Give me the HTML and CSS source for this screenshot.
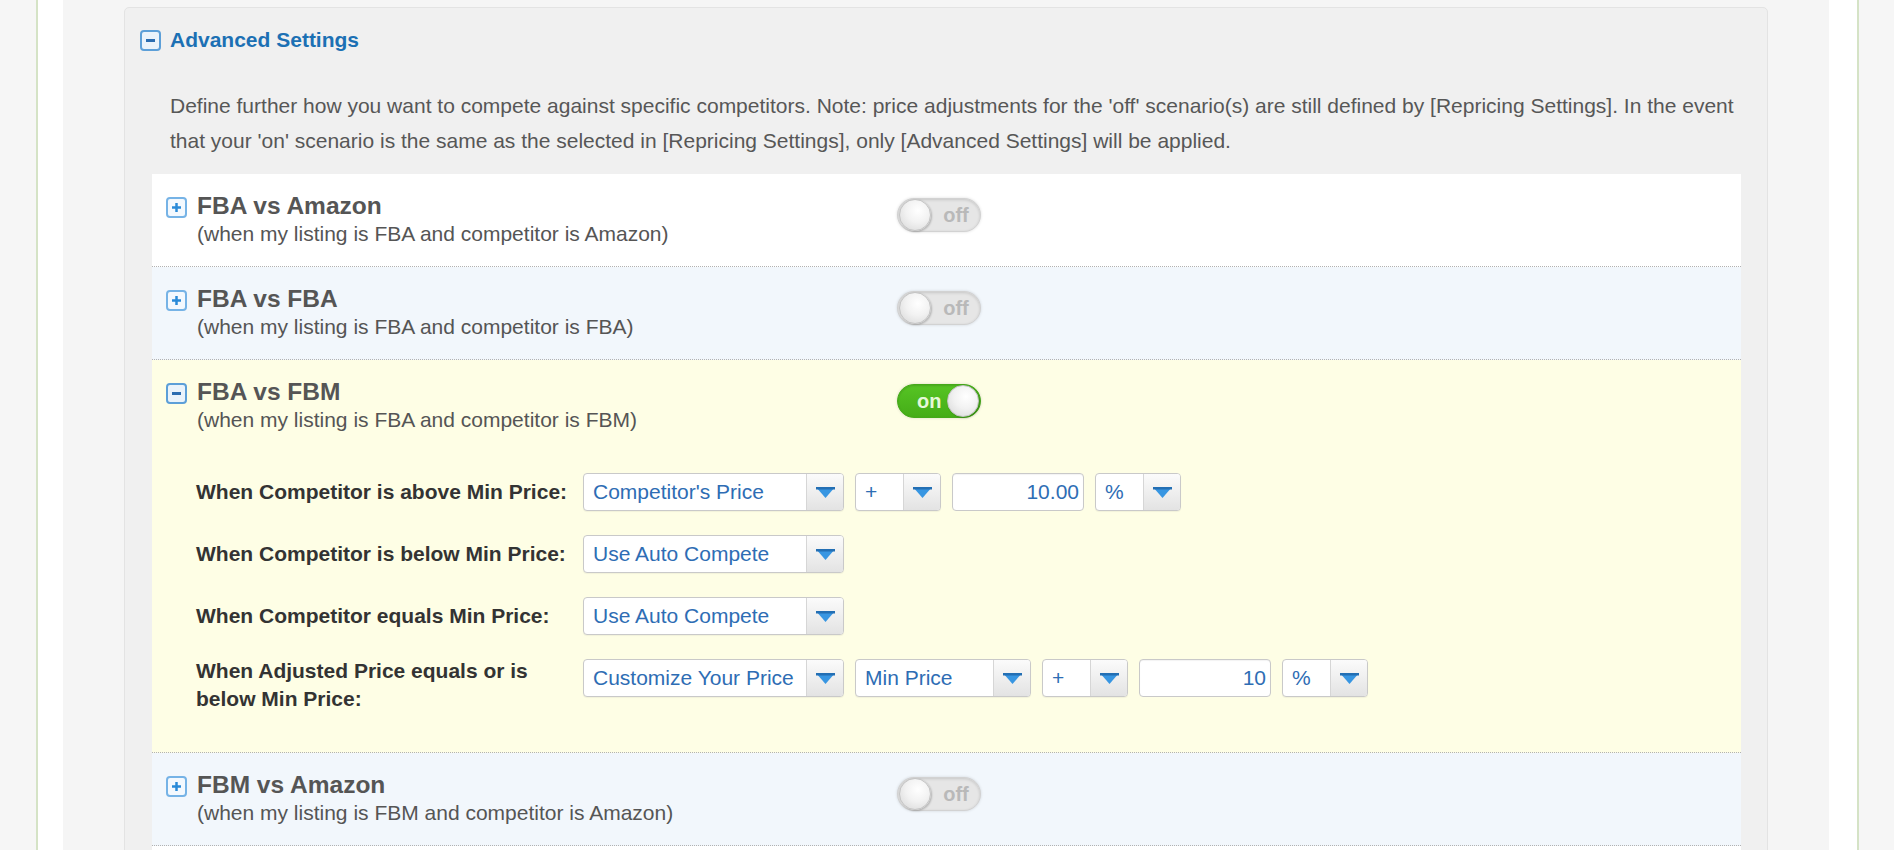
FILE: index.html
```html
<!DOCTYPE html>
<html>
<head>
<meta charset="utf-8">
<link rel="stylesheet" href="styles.css">
</head>
<body>
<div class="page">
  <div class="gutter">
    <div class="panel">
      <div class="panel-head">
        <svg class="ico" width="21" height="21" viewBox="0 0 21 21"><rect x="1" y="1" width="19" height="19" rx="3" fill="#eaf3fb" stroke="#5c9fd8" stroke-width="2"/><rect x="6" y="9" width="9" height="3" fill="#2b6db1"/></svg>
        <span class="panel-title">Advanced Settings</span>
      </div>
      <p class="desc">Define further how you want to compete against specific competitors. Note: price adjustments for the 'off' scenario(s) are still defined by [Repricing Settings]. In the event that your 'on' scenario is the same as the selected in [Repricing Settings], only [Advanced Settings] will be applied.</p>
      <div class="rows">
        <div class="row row-white">
          <div class="row-head">
            <div class="row-title">
              <svg class="ico" width="21" height="21" viewBox="0 0 21 21"><rect x="1" y="1" width="19" height="19" rx="3" fill="#f4f9fe" stroke="#76b3e6" stroke-width="2"/><rect x="6" y="9.25" width="9" height="2.5" fill="#2a8ad8"/><rect x="9.25" y="6" width="2.5" height="9" fill="#2a8ad8"/></svg>
              <div>
                <div class="title">FBA vs Amazon</div>
                <div class="sub">(when my listing is FBA and competitor is Amazon)</div>
              </div>
            </div>
            <div class="toggle off"><span class="knob"></span><span class="tlabel">off</span></div>
          </div>
        </div>
        <div class="row row-blue">
          <div class="row-head">
            <div class="row-title">
              <svg class="ico" width="21" height="21" viewBox="0 0 21 21"><rect x="1" y="1" width="19" height="19" rx="3" fill="#f4f9fe" stroke="#76b3e6" stroke-width="2"/><rect x="6" y="9.25" width="9" height="2.5" fill="#2a8ad8"/><rect x="9.25" y="6" width="2.5" height="9" fill="#2a8ad8"/></svg>
              <div>
                <div class="title">FBA vs FBA</div>
                <div class="sub">(when my listing is FBA and competitor is FBA)</div>
              </div>
            </div>
            <div class="toggle off"><span class="knob"></span><span class="tlabel">off</span></div>
          </div>
        </div>
        <div class="row row-yellow">
          <div class="row-head">
            <div class="row-title">
              <svg class="ico" width="21" height="21" viewBox="0 0 21 21"><rect x="1" y="1" width="19" height="19" rx="3" fill="#eaf3fb" stroke="#5c9fd8" stroke-width="2"/><rect x="6" y="9" width="9" height="3" fill="#2b6db1"/></svg>
              <div>
                <div class="title">FBA vs FBM</div>
                <div class="sub">(when my listing is FBA and competitor is FBM)</div>
              </div>
            </div>
            <div class="toggle on"><span class="tlabel">on</span><span class="knob"></span></div>
          </div>
          <div class="form">
            <div class="frow">
              <div class="flabel">When Competitor is above Min Price:</div>
              <div class="fields">
                <div class="sel w-wide"><span class="sel-text">Competitor's Price</span><span class="sel-btn"><svg width="19" height="11" viewBox="0 0 19 11"><polygon points="0,0 19,0 9.5,11" fill="#3896e2"/><rect x="0" y="0" width="19" height="2.5" fill="#236fb4"/></svg></span></div>
                <div class="sel w-sm"><span class="sel-text">+</span><span class="sel-btn"><svg width="19" height="11" viewBox="0 0 19 11"><polygon points="0,0 19,0 9.5,11" fill="#3896e2"/><rect x="0" y="0" width="19" height="2.5" fill="#236fb4"/></svg></span></div>
                <div class="inp">10.00</div>
                <div class="sel w-sm"><span class="sel-text">%</span><span class="sel-btn"><svg width="19" height="11" viewBox="0 0 19 11"><polygon points="0,0 19,0 9.5,11" fill="#3896e2"/><rect x="0" y="0" width="19" height="2.5" fill="#236fb4"/></svg></span></div>
              </div>
            </div>
            <div class="frow">
              <div class="flabel">When Competitor is below Min Price:</div>
              <div class="fields">
                <div class="sel w-wide"><span class="sel-text">Use Auto Compete</span><span class="sel-btn"><svg width="19" height="11" viewBox="0 0 19 11"><polygon points="0,0 19,0 9.5,11" fill="#3896e2"/><rect x="0" y="0" width="19" height="2.5" fill="#236fb4"/></svg></span></div>
              </div>
            </div>
            <div class="frow">
              <div class="flabel">When Competitor equals Min Price:</div>
              <div class="fields">
                <div class="sel w-wide"><span class="sel-text">Use Auto Compete</span><span class="sel-btn"><svg width="19" height="11" viewBox="0 0 19 11"><polygon points="0,0 19,0 9.5,11" fill="#3896e2"/><rect x="0" y="0" width="19" height="2.5" fill="#236fb4"/></svg></span></div>
              </div>
            </div>
            <div class="frow">
              <div class="flabel multi">When Adjusted Price equals or is below Min Price:</div>
              <div class="fields">
                <div class="sel w-wide"><span class="sel-text">Customize Your Price</span><span class="sel-btn"><svg width="19" height="11" viewBox="0 0 19 11"><polygon points="0,0 19,0 9.5,11" fill="#3896e2"/><rect x="0" y="0" width="19" height="2.5" fill="#236fb4"/></svg></span></div>
                <div class="sel w-mid"><span class="sel-text">Min Price</span><span class="sel-btn"><svg width="19" height="11" viewBox="0 0 19 11"><polygon points="0,0 19,0 9.5,11" fill="#3896e2"/><rect x="0" y="0" width="19" height="2.5" fill="#236fb4"/></svg></span></div>
                <div class="sel w-sm"><span class="sel-text">+</span><span class="sel-btn"><svg width="19" height="11" viewBox="0 0 19 11"><polygon points="0,0 19,0 9.5,11" fill="#3896e2"/><rect x="0" y="0" width="19" height="2.5" fill="#236fb4"/></svg></span></div>
                <div class="inp">10</div>
                <div class="sel w-sm"><span class="sel-text">%</span><span class="sel-btn"><svg width="19" height="11" viewBox="0 0 19 11"><polygon points="0,0 19,0 9.5,11" fill="#3896e2"/><rect x="0" y="0" width="19" height="2.5" fill="#236fb4"/></svg></span></div>
              </div>
            </div>
          </div>
        </div>
        <div class="row row-blue">
          <div class="row-head">
            <div class="row-title">
              <svg class="ico" width="21" height="21" viewBox="0 0 21 21"><rect x="1" y="1" width="19" height="19" rx="3" fill="#f4f9fe" stroke="#76b3e6" stroke-width="2"/><rect x="6" y="9.25" width="9" height="2.5" fill="#2a8ad8"/><rect x="9.25" y="6" width="2.5" height="9" fill="#2a8ad8"/></svg>
              <div>
                <div class="title">FBM vs Amazon</div>
                <div class="sub">(when my listing is FBM and competitor is Amazon)</div>
              </div>
            </div>
            <div class="toggle off"><span class="knob"></span><span class="tlabel">off</span></div>
          </div>
        </div>
        <div class="row row-white row-spacer"></div>
      </div>
    </div>
  </div>
</div>
</body>
</html>
```

FILE: styles.css
```css
html, body {
  margin: 0;
  padding: 0;
}
body {
  background: #f6f6f6;
  font-family: "Liberation Sans", Arial, sans-serif;
  font-size: 21px;
  color: #555;
  overflow: hidden;
}
.page {
  margin-left: 36px;
  width: 1766px;
  border-left: 2px solid #d5e3c6;
  border-right: 2px solid #d5e3c6;
  background: #fff;
  padding: 0 28px 0 25px;
}
.gutter {
  background: #f5f5f5;
  padding: 7px 61px 0 61px;
}
.panel {
  background: #f0f0f0;
  border: 1px solid #e3e3e3;
  border-radius: 5px;
  padding: 18px 26px 0 27px;
}
.panel-head {
  display: flex;
  align-items: center;
  height: 28px;
  margin-left: -12px;
  gap: 9px;
}
.ico {
  display: block;
  flex: none;
}
.panel-title {
  font-weight: bold;
  color: #1c70b4;
  line-height: 28px;
}
.desc {
  margin: 34px 0 16px 18px;
  line-height: 35px;
  color: #575757;
}
.rows {
  display: flex;
  flex-direction: column;
}
.row {
  padding: 18px 0 18px 14px;
  border-bottom: 1px dotted #b2b2b2;
}
.row-white { background: #fff; }
.row-blue { background: #f2f7fc; }
.row-yellow { background: #fefee5; padding-bottom: 39px; }
.row-spacer { height: 40px; box-sizing: border-box; }
.row-head {
  display: flex;
  align-items: flex-start;
}
.row-title {
  width: 731px;
  display: flex;
  gap: 10px;
}
.row-title .ico {
  margin-top: 5px;
}
.title {
  font-size: 24.5px;
  font-weight: bold;
  line-height: 28px;
  color: #555;
}
.sub {
  line-height: 28px;
  color: #555;
}
.toggle {
  margin-top: 6px;
  width: 84px;
  height: 34px;
  box-sizing: border-box;
  border-radius: 17px;
  display: flex;
  align-items: center;
  padding: 0 1px;
  font-size: 20px;
  font-weight: bold;
}
.toggle.off {
  background: #e6e6e6;
  border: 1px solid #d2d2d2;
  box-shadow: inset 0 1px 3px rgba(0,0,0,0.14), 0 0 3px rgba(0,0,0,0.14);
}
.toggle.on {
  background: linear-gradient(#56c424, #45ad17);
  border: 1px solid #45a91a;
  box-shadow: inset 0 1px 2px rgba(0,0,0,0.15), 0 0 3px rgba(0,0,0,0.15);
}
.knob {
  width: 32px;
  height: 32px;
  box-sizing: border-box;
  border-radius: 50%;
  background: radial-gradient(circle at 60% 35%, #ffffff 0%, #f2f2f2 45%, #d6d6d6 100%);
  border: 1px solid #c4c4c4;
  box-shadow: 1px 1px 2px rgba(0,0,0,0.22);
  flex: none;
}
.toggle.off .tlabel {
  flex: 1;
  text-align: center;
  color: #b9b9b9;
  margin-left: 2px;
}
.toggle.on .tlabel {
  color: #e6f8d8;
  margin-left: 18px;
}
.toggle.on .knob {
  margin-left: auto;
}
.form {
  margin-top: 39px;
  padding-left: 30px;
  display: flex;
  flex-direction: column;
  gap: 24px;
}
.frow {
  display: flex;
  align-items: flex-start;
}
.flabel {
  width: 387px;
  flex: none;
  font-weight: bold;
  color: #333;
  line-height: 28px;
  padding-top: 5px;
  box-sizing: border-box;
}
.flabel.multi {
  padding-top: 0;
  margin-top: -2px;
  padding-right: 20px;
}
.fields {
  display: flex;
  gap: 11px;
}
.sel {
  height: 38px;
  box-sizing: border-box;
  border: 1px solid #c9c9c9;
  border-radius: 4px;
  background: #fff;
  display: flex;
  align-items: stretch;
  color: #2e6db4;
  box-shadow: 0 1px 1px rgba(0,0,0,0.05);
  overflow: hidden;
}
.sel-text {
  flex: 1;
  padding-left: 9px;
  line-height: 36px;
  white-space: nowrap;
}
.sel-btn {
  width: 36px;
  flex: none;
  border-left: 1px solid #d6d6d6;
  background: linear-gradient(#fbfbfb, #e3e3e3);
  display: flex;
  align-items: center;
  justify-content: center;
}
.sel-btn svg {
  display: block;
}
.w-wide { width: 261px; }
.w-mid { width: 176px; }
.w-sm { width: 86px; }
.inp {
  width: 132px;
  height: 38px;
  box-sizing: border-box;
  border: 1px solid #c9c9c9;
  border-radius: 4px;
  background: #fff;
  color: #2e6db4;
  text-align: right;
  padding-right: 4px;
  line-height: 36px;
  box-shadow: inset 0 1px 1px rgba(0,0,0,0.05);
}
```
